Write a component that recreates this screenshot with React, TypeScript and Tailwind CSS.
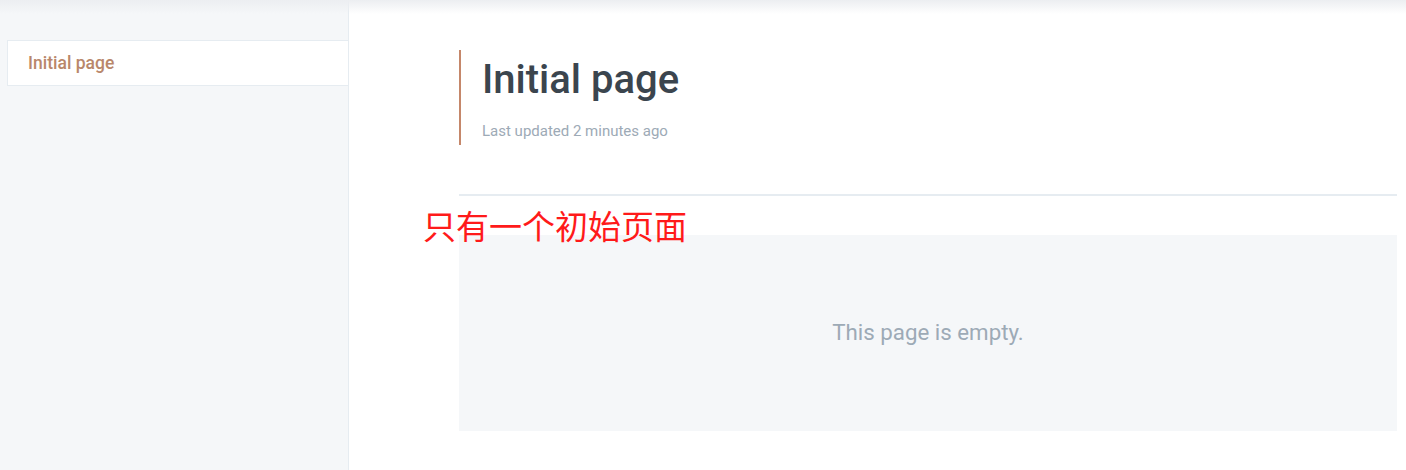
export default function App() {
  return (
    <div
      className="relative flex h-[470px] w-full overflow-hidden bg-white"
      style={{ fontFamily: "Roboto, 'Noto Sans CJK SC', sans-serif" }}
    >
      {/* top shadow */}
      <div className="pointer-events-none absolute inset-x-0 top-0 h-[14px] bg-gradient-to-b from-[#eceef1] to-transparent" />

      <aside className="w-[349px] shrink-0 border-r border-[#e6ecf1] bg-[#f5f7f9] pt-[40px] pl-[7px]">
        <div className="flex h-[46px] items-center border border-r-0 border-[#e6ecf1] bg-white pl-[20px] text-[17.5px] font-medium text-[#b9876b]">
          Initial page
        </div>
      </aside>

      <main className="relative flex-1 pt-[50px] pl-[110px] pr-[9px]">
        <div className="border-l-2 border-[#c5876a] pl-[21px] pb-[4px]">
          <h1 className="text-[40px] leading-[60px] font-medium text-[#3b454e]">Initial page</h1>
          <p className="mt-[11px] text-[15px] leading-[20px] text-[#9daab6]">Last updated 2 minutes ago</p>
        </div>
        <div className="mt-[49px] h-[2px] bg-[#e6ecf1]" />
        <div className="mt-[39px] flex h-[196px] items-center justify-center bg-[#f5f7f9] text-[22.3px] text-[#9daab6]">
          This page is empty.
        </div>
        <div className="absolute left-[74px] top-[205px] text-[33px] leading-[46px] text-[#ff1a1a]">
          只有一个初始页面
        </div>
      </main>
    </div>
  );
}
